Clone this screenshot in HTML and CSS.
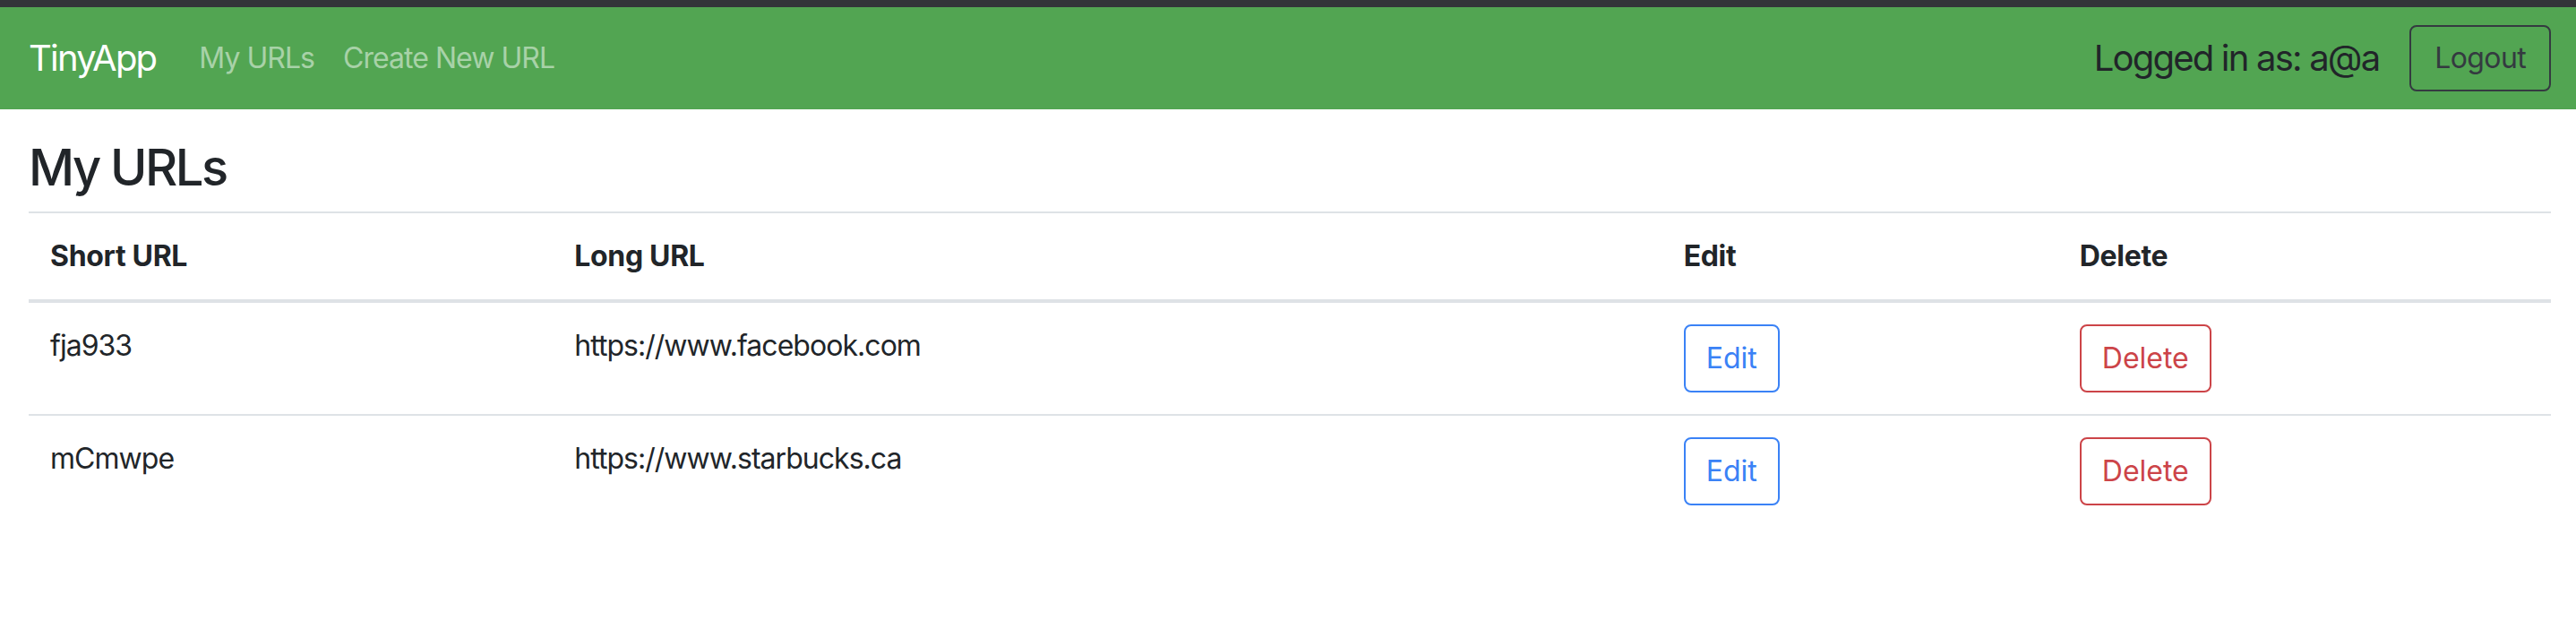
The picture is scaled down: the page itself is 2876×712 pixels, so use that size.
FILE: index.html
```html
<!DOCTYPE html>
<html lang="en">
<head>
<meta charset="utf-8">
<title>TinyApp</title>
<link rel="stylesheet" href="styles.css">
</head>
<body>
<div class="topstrip"></div>
<nav class="navbar">
  <a class="brand" href="#">TinyApp</a>
  <div class="nav-links">
    <a class="nav-link" href="#">My URLs</a>
    <a class="nav-link" href="#">Create New URL</a>
  </div>
  <div class="nav-right">
    <span class="logged">Logged in as: a@a</span>
    <button class="btn btn-dark">Logout</button>
  </div>
</nav>
<main class="container">
  <h1 class="title">My URLs</h1>
  <table class="table">
    <colgroup>
      <col class="c-short">
      <col class="c-long">
      <col class="c-edit">
      <col class="c-del">
    </colgroup>
    <thead>
      <tr>
        <th>Short URL</th>
        <th>Long URL</th>
        <th>Edit</th>
        <th>Delete</th>
      </tr>
    </thead>
    <tbody>
      <tr>
        <td>fja933</td>
        <td>https://www.facebook.com</td>
        <td><button class="btn btn-blue">Edit</button></td>
        <td><button class="btn btn-red">Delete</button></td>
      </tr>
      <tr>
        <td>mCmwpe</td>
        <td>https://www.starbucks.ca</td>
        <td><button class="btn btn-blue">Edit</button></td>
        <td><button class="btn btn-red">Delete</button></td>
      </tr>
    </tbody>
  </table>
</main>
</body>
</html>
```

FILE: styles.css
```css
html, body {
  margin: 0;
  padding: 0;
  background: #ffffff;
}
body {
  font-family: Inter, "Noto Sans", "Liberation Sans", sans-serif;
  font-size: 32px;
  line-height: 1.5;
  color: #212529;
  letter-spacing: -0.03em;
}
.topstrip {
  height: 8px;
  background: #333539;
}
.navbar {
  height: 114px;
  background: #52a552;
  display: flex;
  align-items: center;
  padding: 0 28px 0 32px;
}
.brand {
  font-size: 40px;
  line-height: 60px;
  color: #ffffff;
  text-decoration: none;
  margin-right: 32px;
  letter-spacing: -0.045em;
}
.nav-links {
  display: flex;
}
.nav-link {
  color: rgba(255, 255, 255, 0.5);
  text-decoration: none;
  padding: 0 16px;
  font-size: 32px;
}
.nav-right {
  margin-left: auto;
  display: flex;
  align-items: center;
}
.logged {
  font-size: 40px;
  color: #212529;
  margin-right: 34px;
  letter-spacing: -0.045em;
}
.btn {
  font-family: inherit;
  font-size: 32px;
  line-height: 48px;
  letter-spacing: 0;
  padding: 12px 24px;
  border: 2px solid transparent;
  border-radius: 8px;
  background: transparent;
  cursor: pointer;
  display: inline-block;
}
.btn-dark {
  border-color: #343a40;
  color: #343a40;
  padding: 11px 26px;
  letter-spacing: -0.02em;
}
.btn-blue {
  border-color: #3a82f6;
  color: #3a82f6;
  padding: 12px 23px;
}
.btn-red {
  border-color: #cc4448;
  color: #cc4448;
  padding: 12px 23px;
}
.container {
  padding: 0 28px 0 32px;
}
.title {
  font-size: 56px;
  font-weight: 500;
  line-height: 1.2;
  margin: 32px 0 15px;
  letter-spacing: -0.045em;
}
.table {
  width: 100%;
  border-collapse: collapse;
  table-layout: fixed;
}
.c-short { width: 585px; }
.c-long { width: 1238px; }
.c-edit { width: 442px; }
.c-del { width: 550px; }
.table th,
.table td {
  text-align: left;
  vertical-align: top;
  padding: 24px;
  border-top: 2px solid #dee2e6;
}
.table th {
  font-weight: 700;
  letter-spacing: -0.01em;
}
.table thead th {
  border-bottom: 4px solid #dee2e6;
}
.table tbody tr:first-child td {
  border-top: none;
}
```
